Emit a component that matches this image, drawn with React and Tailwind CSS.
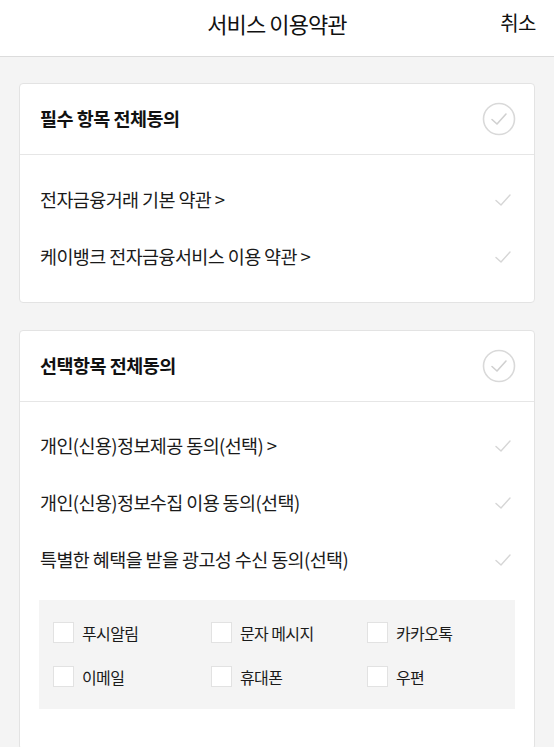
import React from "react";

const font = { fontFamily: '"Noto Sans CJK KR", "Noto Sans", sans-serif' };

function SmallCheck() {
  return (
    <svg width="18" height="14" viewBox="0 0 18 14" fill="none">
      <path d="M2 7.5 L7 12 L16 2" stroke="#d6d6d6" strokeWidth="1.4" strokeLinecap="round" strokeLinejoin="round" />
    </svg>
  );
}

function CircleCheck() {
  return (
    <svg width="34" height="34" viewBox="0 0 34 34" fill="none">
      <circle cx="17" cy="17" r="15.5" stroke="#d9d9d9" strokeWidth="1.6" />
      <path d="M10 17.5 L15 22 L24 12" stroke="#d0d0d0" strokeWidth="1.6" strokeLinecap="round" strokeLinejoin="round" />
    </svg>
  );
}

function Item({ label }) {
  return (
    <div className="h-[57px] flex items-center justify-between pl-[20px] pr-[22px]">
      <span className="text-[18.5px] text-[#1a1a1a] tracking-[-0.6px]">{label}</span>
      <SmallCheck />
    </div>
  );
}

function CardHead({ title }) {
  return (
    <div className="h-[71px] flex items-center justify-between pl-[20px] pr-[18px] border-b border-[#e6e6e6]">
      <span className="text-[18.5px] font-bold text-[#111] tracking-[-0.5px]">{title}</span>
      <CircleCheck />
    </div>
  );
}

function Box({ label }) {
  return (
    <div className="h-[21px] flex items-center gap-[8px]">
      <div className="w-[21px] h-[21px] bg-white border border-[#e2e2e2]" />
      <span className="text-[16px] leading-none text-[#1a1a1a] tracking-[-0.6px]">{label}</span>
    </div>
  );
}

export default function App() {
  return (
    <div className="w-[554px] h-[747px] overflow-hidden bg-[#f4f4f4]" style={font}>
      <header className="h-[57px] bg-white border-b border-[#dcdcdc] relative flex items-center justify-center">
        <h1 className="text-[22px] text-[#111] tracking-[-0.9px] -mt-[10px]">서비스 이용약관</h1>
        <button className="absolute right-[18px] top-[8px] text-[20px] text-[#111] tracking-[-0.5px]">취소</button>
      </header>

      <main className="px-[19px] pt-[26px] flex flex-col gap-[27px]">
        <section className="bg-white border border-[#e3e3e3] rounded-[4px]">
          <CardHead title="필수 항목 전체동의" />
          <div className="pt-[16px] pb-[17px]">
            <Item label="전자금융거래 기본 약관 >" />
            <Item label="케이뱅크 전자금융서비스 이용 약관 >" />
          </div>
        </section>

        <section className="bg-white border border-[#e3e3e3] rounded-[4px]">
          <CardHead title="선택항목 전체동의" />
          <div className="pt-[15px]">
            <Item label="개인(신용)정보제공 동의(선택) >" />
            <Item label="개인(신용)정보수집 이용 동의(선택)" />
            <Item label="특별한 혜택을 받을 광고성 수신 동의(선택)" />
          </div>
          <div className="mx-[19px] mt-[12px] mb-[40px] bg-[#f4f4f4] pl-[14px] py-[22px] grid grid-cols-[158px_156px_1fr] gap-y-[23px]">
            <Box label="푸시알림" />
            <Box label="문자 메시지" />
            <Box label="카카오톡" />
            <Box label="이메일" />
            <Box label="휴대폰" />
            <Box label="우편" />
          </div>
        </section>
      </main>
    </div>
  );
}
